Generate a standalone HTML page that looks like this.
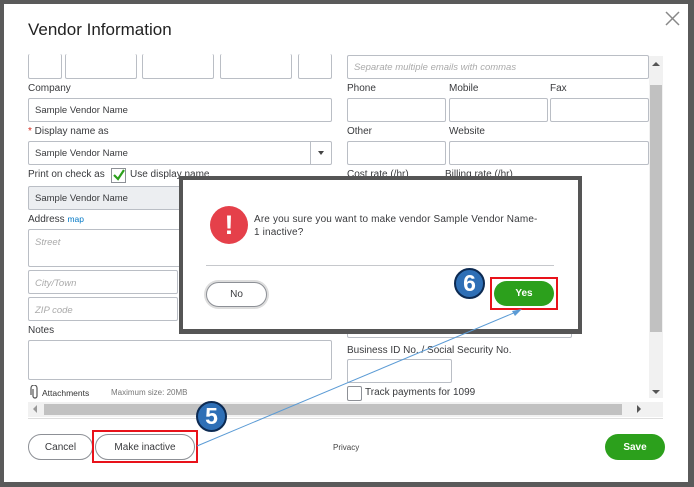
<!DOCTYPE html>
<html><head><style>
*{margin:0;padding:0;box-sizing:border-box}
body{width:694px;height:487px;background:#5a5a5a;font-family:"Liberation Sans",sans-serif;position:relative;overflow:hidden;color:#393a3d}
.a{position:absolute}
.box{position:absolute;border:1px solid #babec5;background:#fff;border-radius:2px}
.lbl{position:absolute;font-size:10px;color:#393a3d}
.ph{font-size:9.5px;color:#aaa;font-style:italic;padding:7px 0 0 6px}
.val{font-size:9.5px;color:#393a3d;padding:6px 0 0 6px}
.btn{position:absolute;border:1px solid #8d9096;border-radius:13px;background:#fff;font-size:10px;color:#393a3d;display:flex;align-items:center;justify-content:center}
.g{background:#2ca01c;border:none;color:#fff;font-weight:bold}
.red{position:absolute;border:2.5px solid #e8121a}
.num{position:absolute;width:31px;height:31px;border-radius:50%;background:#2e6fb6;border:2px solid #0c2a52;color:#fff;font-weight:bold;font-size:23px;text-align:center;line-height:27px}
</style></head><body>
<div class="a" style="left:4px;top:4px;width:684px;height:478px;background:#fff"></div>
<div class="a" style="left:28px;top:20px;font-size:17px;color:#222">Vendor Information</div>
<svg class="a" style="left:665px;top:11px" width="15" height="15"><path d="M1 1L14 14M14 1L1 14" stroke="#888" stroke-width="1.5"/></svg>

<div class="box" style="left:28px;top:54px;width:34px;height:25px;border-top:none"></div>
<div class="box" style="left:65px;top:54px;width:72px;height:25px;border-top:none"></div>
<div class="box" style="left:142px;top:54px;width:72px;height:25px;border-top:none"></div>
<div class="box" style="left:220px;top:54px;width:72px;height:25px;border-top:none"></div>
<div class="box" style="left:298px;top:54px;width:34px;height:25px;border-top:none"></div>
<div class="box ph" style="left:347px;top:55px;width:302px;height:24px;padding-top:6px">Separate multiple emails with commas</div>

<div class="lbl" style="left:28px;top:83px">Company</div>
<div class="box val" style="left:28px;top:98px;width:304px;height:24px">Sample Vendor Name</div>
<div class="lbl" style="left:28px;top:126px"><span style="color:#d52b1e">*</span> Display name as</div>
<div class="box val" style="left:28px;top:141px;width:304px;height:24px">Sample Vendor Name</div>
<div class="a" style="left:310px;top:141px;width:1px;height:24px;background:#babec5"></div>
<div class="a" style="left:318px;top:151px;border:3px solid transparent;border-top:4px solid #444"></div>
<div class="lbl" style="left:28px;top:169px">Print on check as</div>
<div class="a" style="left:111px;top:168px;width:15px;height:15px;border:1px solid #8d9096;background:#fff"></div>
<svg class="a" style="left:112px;top:168px" width="14" height="14"><path d="M2 7L6 11L12 2" stroke="#2ca01c" stroke-width="2.2" fill="none"/></svg>
<div class="lbl" style="left:130px;top:169px">Use display name</div>
<div class="box val" style="left:28px;top:186px;width:160px;height:24px;background:#eceef1">Sample Vendor Name</div>
<div class="lbl" style="left:28px;top:214px">Address <span style="color:#0077c5;font-size:8.5px">map</span></div>
<div class="box ph" style="left:28px;top:229px;width:160px;height:38px">Street</div>
<div class="box ph" style="left:28px;top:270px;width:150px;height:24px">City/Town</div>
<div class="box ph" style="left:28px;top:297px;width:150px;height:24px">ZIP code</div>
<div class="lbl" style="left:28px;top:325px">Notes</div>
<div class="box" style="left:28px;top:340px;width:304px;height:40px"></div>
<svg class="a" style="left:30px;top:385px" width="10" height="14"><path d="M3 4V11A2 2 0 0 0 7 11V3A3 3 0 0 0 1 3V10" stroke="#555" stroke-width="1.2" fill="none"/></svg>
<div class="a" style="left:42px;top:388px;font-size:8.5px;color:#333">Attachments</div>
<div class="a" style="left:111px;top:388px;font-size:8px;color:#777">Maximum size: 20MB</div>

<div class="lbl" style="left:347px;top:83px">Phone</div>
<div class="lbl" style="left:449px;top:83px">Mobile</div>
<div class="lbl" style="left:550px;top:83px">Fax</div>
<div class="box" style="left:347px;top:98px;width:99px;height:24px"></div>
<div class="box" style="left:449px;top:98px;width:99px;height:24px"></div>
<div class="box" style="left:550px;top:98px;width:99px;height:24px"></div>
<div class="lbl" style="left:347px;top:126px">Other</div>
<div class="lbl" style="left:449px;top:126px">Website</div>
<div class="box" style="left:347px;top:141px;width:99px;height:24px"></div>
<div class="box" style="left:449px;top:141px;width:200px;height:24px"></div>
<div class="lbl" style="left:347px;top:169px">Cost rate (/hr)</div>
<div class="lbl" style="left:445px;top:169px">Billing rate (/hr)</div>
<div class="box" style="left:347px;top:320px;width:225px;height:18px"></div>
<div class="lbl" style="left:347px;top:345px;font-size:10px">Business ID No. / Social Security No.</div>
<div class="box" style="left:347px;top:359px;width:105px;height:24px"></div>
<div class="a" style="left:347px;top:386px;width:15px;height:15px;border:1px solid #8d9096;border-radius:2px"></div>
<div class="lbl" style="left:365px;top:387px">Track payments for 1099</div>

<div class="a" style="left:649px;top:56px;width:14px;height:342px;background:#f1f1f1"></div>
<div class="a" style="left:650px;top:85px;width:12px;height:247px;background:#c1c1c1"></div>
<div class="a" style="left:652px;top:62px;border:4px solid transparent;border-bottom:4px solid #555;border-top:none"></div>
<div class="a" style="left:652px;top:390px;border:4px solid transparent;border-top:4px solid #555;border-bottom:none"></div>
<div class="a" style="left:28px;top:402px;width:635px;height:15px;background:#f1f1f1"></div>
<div class="a" style="left:44px;top:404px;width:578px;height:11px;background:#c1c1c1"></div>
<div class="a" style="left:33px;top:405px;border:4px solid transparent;border-right:4px solid #999;border-left:none"></div>
<div class="a" style="left:637px;top:405px;border:4px solid transparent;border-left:4px solid #555;border-right:none"></div>
<div class="a" style="left:28px;top:418px;width:635px;height:1px;background:#ddd"></div>

<div class="btn" style="left:28px;top:434px;width:65px;height:26px">Cancel</div>
<div class="btn" style="left:95px;top:434px;width:100px;height:26px">Make inactive</div>
<div class="red" style="left:92px;top:430px;width:106px;height:33px"></div>
<div class="a" style="left:333px;top:443px;font-size:8px;color:#444">Privacy</div>
<div class="btn g" style="left:605px;top:434px;width:60px;height:26px">Save</div>

<div class="a" style="left:179px;top:176px;width:403px;height:158px;background:#555"></div>
<div class="a" style="left:183px;top:180px;width:395px;height:149px;background:#fff"></div>
<div class="a" style="left:210px;top:206px;width:38px;height:38px;border-radius:50%;background:#e5404a;color:#fff;font-weight:bold;font-size:27px;text-align:center;line-height:38px">!</div>
<div class="a" style="left:254px;top:213px;font-size:10px;color:#393a3d;line-height:13px;letter-spacing:.15px">Are you sure you want to make vendor Sample Vendor Name-<br>1 inactive?</div>
<div class="a" style="left:206px;top:265px;width:348px;height:1px;background:#c6c8cc"></div>
<div class="btn" style="left:206px;top:282px;width:61px;height:25px;box-shadow:0 0 0 2px #ddd">No</div>
<div class="btn g" style="left:494px;top:281px;width:60px;height:25px">Yes</div>
<div class="red" style="left:490px;top:277px;width:68px;height:33px"></div>
<div class="num" style="left:454px;top:268px">6</div>
<div class="num" style="left:196px;top:401px">5</div>
<svg class="a" style="left:0;top:0" width="694" height="487"><path d="M197 446L516 312" stroke="#5b9bd5" stroke-width="1"/><path d="M522 309L512 311L515 316Z" fill="#5b9bd5"/></svg>
</body></html>
